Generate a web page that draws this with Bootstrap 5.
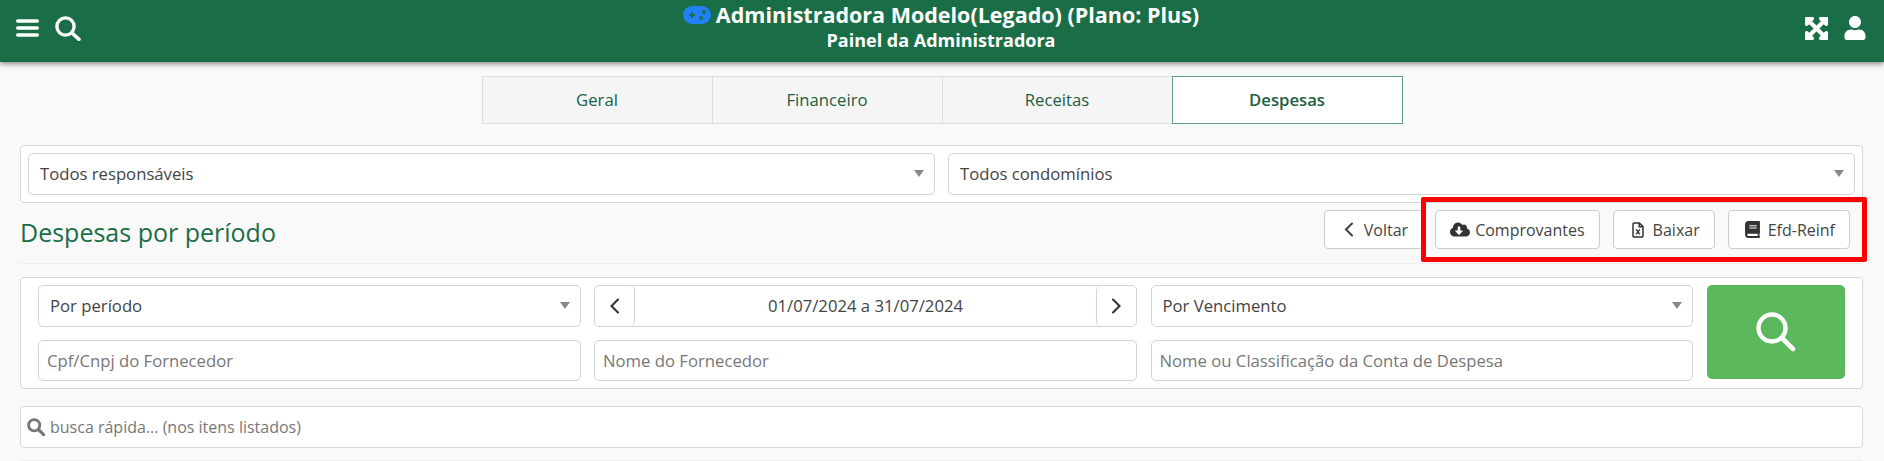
<!DOCTYPE html>
<html lang="pt-BR">

<head>
  <meta charset="UTF-8">
  <title>Painel da Administradora</title>
  <link href="https://cdn.jsdelivr.net/npm/bootstrap@5.3.0/dist/css/bootstrap.min.css" rel="stylesheet">
  <style>
    html, body { height: 461px; overflow: hidden; }
    body { background: #f9f9f9; color: #444; font-family: "Open Sans", sans-serif; font-size: 16.7px; }
    .topbar { height: 62px; background: #1a6e47; color: #fff; box-shadow: 0 2px 5px rgba(0, 0, 0, .45); padding: 0 18px 0 16px; }
    .topbar-side { width: 150px; }
    .topbar-title { font-size: 21.5px; font-weight: 700; line-height: 27px; padding-top: 1px; gap: 5px; }
    .topbar-sub { font-size: 18px; font-weight: 700; line-height: 24px; }
    .tab-strip { width: 921px; height: 48px; margin: 14px auto 21px; }
    .tab-item { flex: 1 1 0; background: #f5f5f5; border: 1px solid #ddd; border-left-width: 0; color: #1b5e42; line-height: 46px; text-align: center; text-decoration: none; }
    .tab-item:first-child { border-left-width: 1px; }
    .tab-item.is-active { background: #fff; border: 1px solid #5f9f82; margin-left: -1px; font-weight: 600; }
    .page-body { padding: 0 21px 0 20px; }
    .box { background: #fff; border: 1px solid #d5d8de; border-radius: 4px; }
    .box-top { padding: 7px; }
    .box-top .row { --bs-gutter-x: 13px; }
    .pick, .field { height: 42px; border: 1px solid #d0d3d9; border-radius: 5px; color: #444; font-size: 16.7px; padding: 0 11px; background-color: #fff; }
    .pick { appearance: none; background-image: url("data:image/svg+xml,%3Csvg xmlns='http://www.w3.org/2000/svg' width='10' height='7'%3E%3Cpath d='M0 0h10L5 7z' fill='%23888'/%3E%3C/svg%3E"); background-repeat: no-repeat; background-position: right 10px top 16px; width: 100%; }
    .field { width: 100%; height: 41px; padding: 0 8px; }
    .field::placeholder, .quick-input::placeholder { color: #777; opacity: 1; }
    .title-row { height: 61px; border-bottom: 1px solid #eee; padding: 7px 13px 0 0; }
    .page-title { color: #1a6e47; font-size: 25px; font-weight: 400; margin: 0; line-height: 33px; padding-top: 6px; }
    .act-btn { height: 39px; background: #fff; border: 1px solid #ccc; border-radius: 4px; color: #444; font-size: 16px; padding: 0 14px; display: inline-flex; align-items: center; }
    .act-ico { width: 20px; margin-right: 5px; display: flex; justify-content: center; }
    .act-gap { gap: 13px; }
    .act-first { margin-right: -1px; }
    .redmark { position: absolute; left: 1421px; top: 197px; width: 446px; height: 65px; border: 5px solid #f00; border-radius: 2px; pointer-events: none; }
    .box-filter { margin-top: 13px; padding: 7px 17px; gap: 21px; }
    .filter-grid { --bs-gutter-x: 13px; --bs-gutter-y: 13px; flex: 1 1 0; }
    .filter-wide { flex: 0 0 556px; width: 556px; }
    .filter-rest { flex: 1 1 0; padding-left: 7px; padding-right: 0; }
    .date-group { height: 42px; border: 1px solid #d0d3d9; border-radius: 5px; background: #fff; }
    .date-text { line-height: 40px; }
    .date-arrow { width: 40px; background: #fff; border: 0; padding: 0; display: flex; align-items: center; justify-content: center; }
    .date-arrow:first-child { border-right: 1px solid #d0d3d9; border-radius: 5px; }
    .date-arrow:last-child { border-left: 1px solid #d0d3d9; border-radius: 5px; }
    .go-btn { width: 138px; height: 94px; background: #5cb85c; border: 0; border-radius: 5px; display: flex; align-items: center; justify-content: center; flex: none; }
    .quick-box { height: 42px; margin-top: 17px; padding-left: 6px; }
    .quick-input { border: 0; outline: 0; flex: 1 1 0; font-size: 16px; color: #444; margin-left: 3px; background: transparent; }
    .end-line { margin-top: 12px; border-top: 1px solid #eee; }
  </style>
</head>

<body>
  <header class="topbar d-flex align-items-start justify-content-between">
    <div class="topbar-side d-flex align-items-center gap-3" style="height:56px">
      <svg width="23" height="18" viewBox="0 0 23 18"><path d="M1.7 2h19.6M1.7 9h19.6M1.7 16h19.6" stroke="#fff" stroke-width="3.4" stroke-linecap="round"/></svg>
      <svg width="26" height="25" viewBox="0 0 26 25"><circle cx="10.5" cy="10.5" r="8.6" fill="none" stroke="#fff" stroke-width="3.4"/><path d="M17 17l7 6.4" stroke="#fff" stroke-width="3.6" stroke-linecap="round"/></svg>
    </div>
    <div class="text-center">
      <div class="topbar-title d-flex align-items-center justify-content-center">
        <svg width="28" height="18" viewBox="0 0 28 18"><rect width="28" height="18" rx="9" fill="#1f80f8"/><path d="M6 9h6M9 6v6" stroke="#1a6e47" stroke-width="1.8"/><circle cx="21" cy="6" r="1.9" fill="#1a6e47"/><circle cx="18" cy="12" r="1.9" fill="#1a6e47"/></svg>
        <span>Administradora Modelo(Legado) (Plano: Plus)</span>
      </div>
      <div class="topbar-sub">Painel da Administradora</div>
    </div>
    <div class="topbar-side d-flex align-items-center justify-content-end gap-3" style="height:56px">
      <svg width="23" height="23" viewBox="-8 24 464 464" fill="#fff" stroke="#fff" stroke-width="26"><path d="M448 344v112a23.94 23.94 0 0 1-24 24H312c-21.39 0-32.09-25.9-17-41l36.2-36.2L224 295.6 116.77 402.9 153 439c15.09 15.1 4.39 41-17 41H24a23.94 23.94 0 0 1-24-24V344c0-21.4 25.89-32.1 41-17l36.19 36.2L184.46 256 77.18 148.7 41 185c-15.1 15.1-41 4.4-41-17V56a23.94 23.94 0 0 1 24-24h112c21.39 0 32.09 25.9 17 41l-36.2 36.2L224 216.4l107.23-107.3L295 73c-15.09-15.1-4.39-41 17-41h112a23.94 23.94 0 0 1 24 24v112c0 21.4-25.89 32.1-41 17l-36.19-36.2L263.54 256l107.28 107.3L407 327.1c15.1-15.2 41-4.5 41 16.9z"/></svg>
      <svg width="22" height="24" viewBox="0 0 448 512" fill="#fff"><path d="M224 256c70.7 0 128-57.3 128-128S294.7 0 224 0 96 57.3 96 128s57.3 128 128 128zm89.6 32h-16.7c-22.2 10.2-46.9 16-72.9 16s-50.6-5.8-72.9-16h-16.7C60.2 288 0 348.2 0 422.4V464c0 26.5 21.5 48 48 48h352c26.5 0 48-21.5 48-48v-41.6c0-74.2-60.2-134.4-134.4-134.4z"/></svg>
    </div>
  </header>

  <nav class="tab-strip d-flex">
    <a class="tab-item" href="#">Geral</a>
    <a class="tab-item" href="#">Financeiro</a>
    <a class="tab-item" href="#">Receitas</a>
    <a class="tab-item is-active" href="#">Despesas</a>
  </nav>

  <main class="page-body">
    <section class="box box-top">
      <div class="row row-cols-2">
        <div class="col"><select class="pick"><option>Todos responsáveis</option></select></div>
        <div class="col"><select class="pick"><option>Todos condomínios</option></select></div>
      </div>
    </section>

    <div class="title-row d-flex justify-content-between align-items-start">
      <h1 class="page-title">Despesas por período</h1>
      <div class="d-flex act-gap">
        <button class="act-btn act-first"><span class="act-ico"><svg width="10" height="15" viewBox="0 0 10 15"><path d="M8 1.5L2 7.5l6 6" fill="none" stroke="#444" stroke-width="2.1" stroke-linecap="round"/></svg></span>Voltar</button>
        <button class="act-btn"><span class="act-ico"><svg width="21" height="17" viewBox="0 0 640 512" fill="#333"><path d="M537.6 226.6c4.1-10.7 6.4-22.4 6.4-34.6 0-53-43-96-96-96-19.7 0-38.1 6-53.3 16.2C367 64.2 315.3 32 256 32c-88.4 0-160 71.6-160 160 0 2.7.1 5.4.2 8.1C40.2 219.8 0 273.2 0 336c0 79.5 64.5 144 144 144h368c70.7 0 128-57.3 128-128 0-61.9-44-113.6-102.4-125.4zm-132.9 88.7L299.3 420.7c-6.2 6.2-16.4 6.2-22.6 0L171.3 315.3c-10.1-10.1-2.9-27.3 11.3-27.3H248V176c0-8.8 7.2-16 16-16h48c8.8 0 16 7.2 16 16v112h65.4c14.2 0 21.4 17.2 11.3 27.3z"/></svg></span>Comprovantes</button>
        <button class="act-btn"><span class="act-ico"><svg width="12" height="16" viewBox="0 0 12 16"><path d="M1 2.2A1.2 1.2 0 0 1 2.2 1H7.4L11 4.6v9.2A1.2 1.2 0 0 1 9.8 15H2.2A1.2 1.2 0 0 1 1 13.8zM7.2 1v3.8H11" fill="none" stroke="#333" stroke-width="1.5"/><path d="M4.2 7.4l3.6 5M7.8 7.4l-3.6 5" stroke="#333" stroke-width="1.4"/></svg></span>Baixar</button>
        <button class="act-btn"><span class="act-ico"><svg width="15" height="17" viewBox="0 0 448 512" fill="#333"><path d="M448 360V24c0-13.3-10.7-24-24-24H96C43 0 0 43 0 96v320c0 53 43 96 96 96h328c13.3 0 24-10.7 24-24v-16c0-7.5-3.5-14.3-8.9-18.7-4.2-15.4-4.2-59.3 0-74.7 5.4-4.3 8.9-11.1 8.9-18.6zM128 134c0-3.3 2.7-6 6-6h212c3.3 0 6 2.7 6 6v20c0 3.3-2.7 6-6 6H134c-3.3 0-6-2.7-6-6v-20zm0 64c0-3.3 2.7-6 6-6h212c3.3 0 6 2.7 6 6v20c0 3.3-2.7 6-6 6H134c-3.3 0-6-2.7-6-6v-20zm253.4 250H96c-17.7 0-32-14.3-32-32 0-17.6 14.4-32 32-32h285.4c-1.9 17.1-1.9 46.9 0 64z"/></svg></span>Efd-Reinf</button>
      </div>
    </div>

    <section class="box box-filter d-flex">
      <div class="row filter-grid">
        <div class="filter-wide"><select class="pick"><option>Por período</option></select></div>
        <div class="filter-wide">
          <div class="date-group d-flex">
            <button class="date-arrow"><svg width="11" height="16" viewBox="0 0 11 16"><path d="M9 1.5L2.5 8 9 14.5" fill="none" stroke="#333" stroke-width="2.1" stroke-linecap="round"/></svg></button>
            <div class="date-text flex-grow-1 text-center">01/07/2024 a 31/07/2024</div>
            <button class="date-arrow"><svg width="11" height="16" viewBox="0 0 11 16"><path d="M2 1.5L8.5 8 2 14.5" fill="none" stroke="#333" stroke-width="2.1" stroke-linecap="round"/></svg></button>
          </div>
        </div>
        <div class="filter-rest"><select class="pick"><option>Por Vencimento</option></select></div>
        <div class="w-100 mt-0"></div>
        <div class="filter-wide"><input class="field" placeholder="Cpf/Cnpj do Fornecedor"></div>
        <div class="filter-wide"><input class="field" placeholder="Nome do Fornecedor"></div>
        <div class="filter-rest"><input class="field" placeholder="Nome ou Classificação da Conta de Despesa"></div>
      </div>
      <button class="go-btn"><svg width="40" height="40" viewBox="0 0 40 40"><circle cx="16" cy="16" r="13.5" fill="none" stroke="#fff" stroke-width="4.4"/><path d="M26 26l11 11" stroke="#fff" stroke-width="4.6" stroke-linecap="round"/></svg></button>
    </section>

    <div class="box quick-box d-flex align-items-center">
      <svg width="18" height="18" viewBox="0 0 18 18"><circle cx="7.2" cy="7.2" r="5.6" fill="none" stroke="#777" stroke-width="2.8"/><path d="M11.6 11.6l5 5" stroke="#777" stroke-width="3.2" stroke-linecap="round"/></svg>
      <input class="quick-input" placeholder="busca rápida... (nos itens listados)">
    </div>
    <div class="end-line"></div>
  </main>

  <div class="redmark"></div>

  <script src="https://cdn.jsdelivr.net/npm/bootstrap@5.3.0/dist/js/bootstrap.bundle.min.js"></script>
</body>

</html>
